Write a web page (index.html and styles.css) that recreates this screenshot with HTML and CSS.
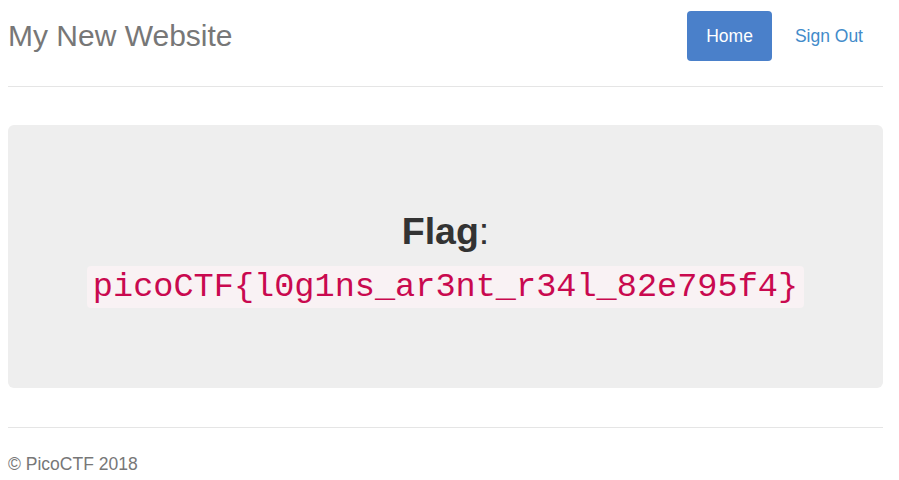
FILE: index.html
```html
<!DOCTYPE html>
<html>
<head>
<meta charset="utf-8">
<title>My New Website</title>
<link rel="stylesheet" href="styles.css">
</head>
<body>
<div class="container">
  <div class="header">
    <h3 class="brand">My New Website</h3>
    <nav class="nav">
      <a class="pill active" href="#">Home</a>
      <a class="pill" href="#">Sign Out</a>
    </nav>
  </div>
  <div class="jumbotron">
    <h1 class="flag-title"><b>Flag</b>:</h1>
    <h1 class="flag-line"><code class="flag">picoCTF{l0g1ns_ar3nt_r34l_82e795f4}</code></h1>
  </div>
  <footer class="footer">
    <p>&copy; PicoCTF 2018</p>
  </footer>
</div>
</body>
</html>
```

FILE: styles.css
```css
html, body {
  margin: 0;
  padding: 0;
  background: #fff;
}
body {
  font-family: "Liberation Sans", Arial, sans-serif;
  color: #333;
}
.container {
  padding: 0 16px 0 8px;
}
.header {
  display: flex;
  justify-content: space-between;
  align-items: center;
  padding: 11px 0 25px;
  border-bottom: 1px solid #e5e5e5;
}
.brand {
  margin: 0;
  font-size: 30px;
  font-weight: normal;
  color: #777;
  line-height: 50px;
}
.nav {
  display: flex;
  gap: 4px;
  margin-right: 1px;
}
.pill {
  display: block;
  height: 50px;
  line-height: 50px;
  padding: 0 19px;
  font-size: 17.5px;
  border-radius: 4px;
  color: #428bca;
  text-decoration: none;
}
.pill.active {
  background: #4a80ca;
  color: #fff;
}
.jumbotron {
  margin-top: 38px;
  height: 263px;
  box-sizing: border-box;
  padding-top: 86px;
  background: #eee;
  border-radius: 6px;
  text-align: center;
}
.flag-title {
  margin: 0;
  font-size: 37.5px;
  line-height: 40px;
  font-weight: normal;
  color: #333;
}
.flag-title b {
  font-weight: bold;
}
.flag-line {
  margin: 11px 0 0;
  font-size: 36px;
  line-height: 44px;
  font-weight: normal;
}
.flag {
  font-family: "Liberation Mono", "Courier New", monospace;
  font-size: 33.6px;
  color: #c9094f;
  background: #f9f2f4;
  padding: 2px 6px;
  border-radius: 4px;
}
.footer {
  margin-top: 39px;
  border-top: 1px solid #e5e5e5;
  padding-top: 19px;
  color: #777;
}
.footer p {
  margin: 0;
  font-size: 17.5px;
  line-height: 34px;
}
```
